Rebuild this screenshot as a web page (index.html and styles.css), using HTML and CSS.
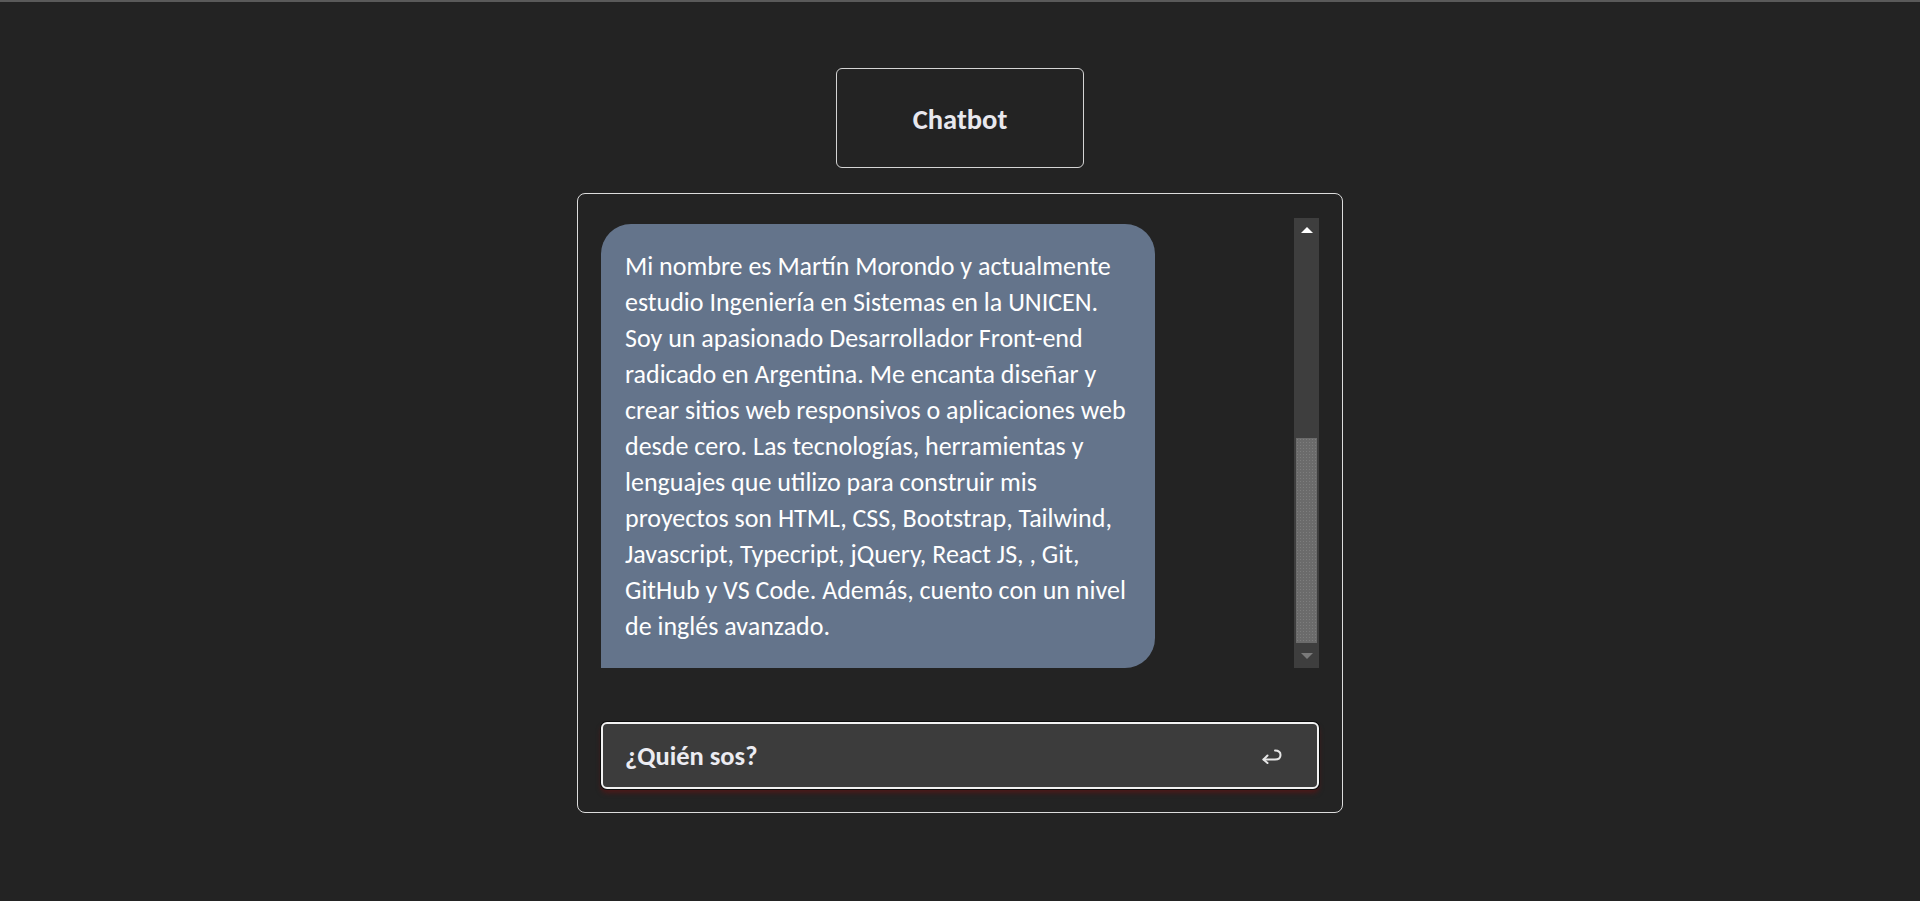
FILE: index.html
```html
<!DOCTYPE html>
<html lang="es">
<head>
<meta charset="utf-8">
<title>Chatbot</title>
<link rel="stylesheet" href="styles.css">
</head>
<body>
<main class="page">
  <header class="title-box"><h1 class="title">Chatbot</h1></header>
  <section class="chat">
    <div class="messages">
      <div class="message-list">
        <div class="bubble bot">Mi nombre es Martín Morondo y actualmente<br>estudio Ingeniería en Sistemas en la UNICEN.<br>Soy un apasionado Desarrollador Front-end<br>radicado en Argentina. Me encanta diseñar y<br>crear sitios web responsivos o aplicaciones web<br>desde cero. Las tecnologías, herramientas y<br>lenguajes que utilizo para construir mis<br>proyectos son HTML, CSS, Bootstrap, Tailwind,<br>Javascript, Typecript, jQuery, React JS, , Git,<br>GitHub y VS Code. Además, cuento con un nivel<br>de inglés avanzado.</div>
      </div>
      <div class="scrollbar">
        <div class="sb-arrow up"></div>
        <div class="sb-track"><div class="sb-thumb"></div></div>
        <div class="sb-arrow down"></div>
      </div>
    </div>
    <form class="composer">
      <span class="composer-text">¿Quién sos?</span>
      <svg class="enter-icon" width="22" height="16" viewBox="0 0 22 16" fill="none" stroke="#e6e6e6" stroke-width="2" stroke-linecap="round" stroke-linejoin="round">
        <path d="M14 2.5 C18.5 2.5 19.5 5 19.5 7 C19.5 9.5 17.5 11.5 14 11.5 L2.5 11.5"/>
        <path d="M6.5 7.5 L2.5 11.5 L6.5 15"/>
      </svg>
    </form>
  </section>
</main>
</body>
</html>
```
FILE: styles.css
```css
html, body {
  margin: 0;
  padding: 0;
}
body {
  background: #232323;
  border-top: 2px solid #5a5a5a;
  min-height: 899px;
  font-family: Carlito, Calibri, Lato, "Noto Sans", sans-serif;
  color: #ffffff;
}
.page {
  display: flex;
  flex-direction: column;
  align-items: center;
  padding-top: 66px;
  gap: 25px;
}
.title-box {
  width: 246px;
  height: 98px;
  border: 1px solid #d4d4d4;
  border-radius: 6px;
  display: flex;
  align-items: center;
  justify-content: center;
}
.title {
  margin: 2px 0 0 0;
  font-size: 28.5px;
  font-weight: 700;
  color: #e8e8ee;
}
.chat {
  width: 718px;
  border: 1px solid #dcdcdc;
  border-radius: 8px;
  padding: 24px 23px 23px 23px;
  display: flex;
  flex-direction: column;
  gap: 54px;
}
.messages {
  height: 450px;
  display: flex;
  overflow: hidden;
}
.message-list {
  flex: 1;
  padding-top: 6px;
}
.bubble {
  width: 506px;
  padding: 24px;
  background: #64748b;
  border-radius: 30px 30px 30px 0;
  font-size: 26px;
  line-height: 36px;
  color: #ffffff;
  white-space: nowrap;
}
.scrollbar {
  width: 25px;
  background: #3e3e3e;
  display: flex;
  flex-direction: column;
}
.sb-arrow {
  height: 24px;
  display: flex;
  align-items: center;
  justify-content: center;
}
.sb-arrow::before {
  content: "";
  width: 0;
  height: 0;
  border-left: 6px solid transparent;
  border-right: 6px solid transparent;
}
.sb-arrow.up::before {
  border-bottom: 6px solid #ffffff;
}
.sb-arrow.down::before {
  border-top: 6px solid #7a7a7a;
}
.sb-track {
  flex: 1;
  display: flex;
  flex-direction: column;
  justify-content: flex-end;
  padding: 0 2px 1px 2px;
}
.sb-thumb {
  height: 205px;
  background-color: #6b6b6b;
  background-image: radial-gradient(circle, #7d7d7d 0.6px, transparent 0.8px);
  background-size: 3px 3px;
}
.composer {
  margin: 0;
  height: 63px;
  border: 2px solid #f2f2f2;
  border-radius: 6px;
  background: #3c3c3c;
  box-shadow: 0 0 0 1px #0c0c0c, 0 4px 5px rgba(110, 16, 16, 0.55);
  display: flex;
  align-items: center;
  justify-content: space-between;
  padding: 0 34px 0 22px;
}
.composer-text {
  font-size: 26.5px;
  font-weight: 700;
  color: #ececf2;
}
.enter-icon {
  display: block;
}
```
